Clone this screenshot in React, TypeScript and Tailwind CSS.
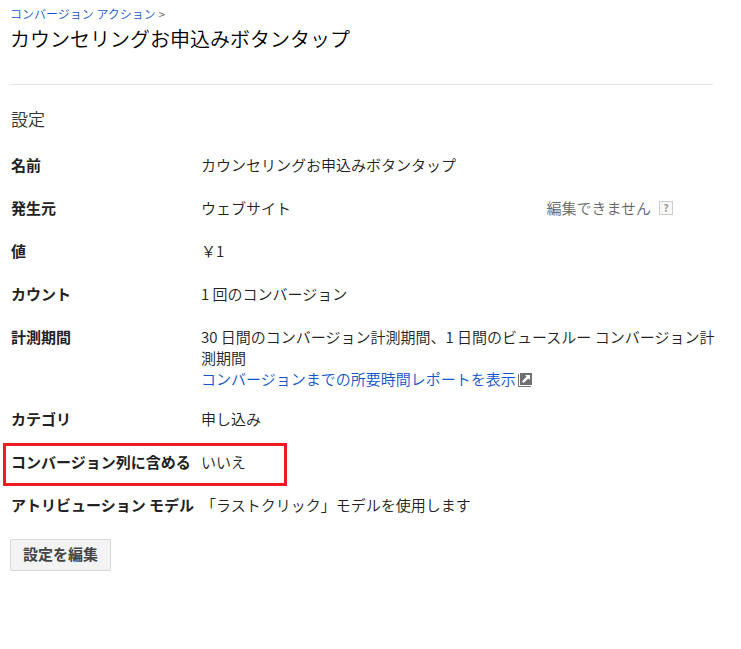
import React from "react";

const rows = [
  { label: "名前", value: "カウンセリングお申込みボタンタップ" },
  { label: "発生元", value: "ウェブサイト", locked: true },
  { label: "値", value: "￥1" },
  { label: "カウント", value: "1 回のコンバージョン" },
  {
    label: "計測期間",
    value: "30 日間のコンバージョン計測期間、1 日間のビュースルー コンバージョン計測期間",
    report: true,
  },
  { label: "カテゴリ", value: "申し込み" },
  { label: "コンバージョン列に含める", value: "いいえ", highlight: true },
  { label: "アトリビューション モデル", value: "「ラストクリック」モデルを使用します" },
];

const PopoutIcon = () => (
  <svg viewBox="0 0 14 14" className="inline-block size-3.5 ml-0.5 align-[-2px]" aria-hidden="true">
    <path d="M0 1h1v12h12v1H0z" fill="#777" />
    <rect x="2" width="12" height="12" fill="#707070" />
    <path d="M7 2h5v5l-1.600-1.600L5.500 10 4 8.500l4.600-4.900z" fill="#fff" />
  </svg>
);

const App = () => {
  return (
    <main className="min-h-screen bg-white pl-2.5 pr-5 pt-1 pb-8 text-[#222] text-[15px] leading-[21px] font-['Noto_Sans_CJK_JP',sans-serif]">
      <header className="mr-2 border-b border-[#e5e5e5] pb-[30px]">
        <nav className="text-xs leading-5 font-[350] text-[#666]">
          <a href="#" className="text-[#15c]">コンバージョン アクション</a> &gt;
        </nav>
        <h1 className="text-xl leading-[30px] font-[350] text-black">カウンセリングお申込みボタンタップ</h1>
      </header>
      <section className="pt-[22px]">
        <h2 className="pl-px text-[17px] leading-6 font-[350] text-[#333] mb-3">設定</h2>
        <dl className="pl-px">
          {rows.map((row) => (
            <div key={row.label} className={row.report ? "flex pt-[11px] pb-2" : "relative flex py-[11px]"}>
              {row.highlight && (
                <div className="absolute -left-2 top-[3px] h-[43px] w-[284px] border-3 border-[#ed1c24]" />
              )}
              <dt className="w-[190px] flex-none font-bold whitespace-nowrap">{row.label}</dt>
              <dd className="flex-1 font-[350]">
                {row.value}
                {row.report && (
                  <a href="#" className="block text-[#15c]">
                    コンバージョンまでの所要時間レポートを表示
                    <PopoutIcon />
                  </a>
                )}
              </dd>
              {row.locked && (
                <dd className="flex items-center gap-2 pr-12 font-[350] text-[#666]">
                  編集できません
                  <button className="size-3.5 border border-[#ccc] bg-[#f8f8f8] text-[10px] leading-3 font-bold text-[#999]">?</button>
                </dd>
              )}
            </div>
          ))}
        </dl>
        <button className="mt-[13px] h-8 rounded-xs border border-[#d8d8d8] bg-[#f3f3f3] px-3 pb-1 font-bold text-[#444]">設定を編集</button>
      </section>
    </main>
  );
};

export default App;
